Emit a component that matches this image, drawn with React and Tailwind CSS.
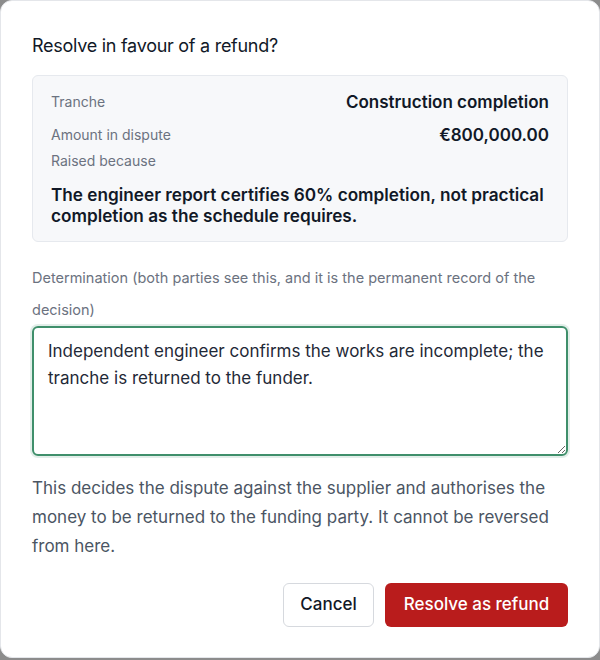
export default function App() {
  return (
    <div className="h-[660px] w-[600px] bg-[#8c8c8c] font-['Inter',sans-serif]">
      <div className="flex h-[658px] w-[600px] flex-col rounded-xl border border-[#e4e6ea] bg-white px-[31px] pt-[31px]">
        <h2 className="text-[18px] leading-7 tracking-[-0.015em] text-[#111827]">
          Resolve in favour of a refund?
        </h2>

        <div className="mt-[15px] rounded-md border border-[#e6e9ee] bg-[#f7f8fa] px-[18px] pt-[14px] pb-[15px]">
          <div className="flex items-center justify-between leading-6">
            <span className="text-[14px] text-[#6b7280]">Tranche</span>
            <span className="text-[17px] font-semibold text-[#111827]">Construction completion</span>
          </div>
          <div className="mt-[9px] flex items-center justify-between leading-6">
            <span className="text-[14px] text-[#6b7280]">Amount in dispute</span>
            <span className="text-[17px] font-semibold text-[#111827]">€800,000.00</span>
          </div>
          <div className="mt-[4px] text-[14px] leading-5 text-[#6b7280]">Raised because</div>
          <p className="mt-[13px] text-[17.2px] font-semibold leading-[21px] text-[#111827]">
            The engineer report certifies 60% completion, not practical completion as the schedule requires.
          </p>
        </div>

        <label className="mt-[20px] text-[14.5px] leading-[32px] text-[#6b7280]">
          Determination (both parties see this, and it is the permanent record of the decision)
        </label>

        <textarea
          className="h-[130px] w-full resize-y rounded-md border-2 border-[#3f8f6b] px-[14px] py-[10px] text-[17px] leading-[27px] text-[#1f2937] shadow-[0_0_0_2px_rgba(63,143,107,0.15)] outline-none"
          defaultValue="Independent engineer confirms the works are incomplete; the tranche is returned to the funder."
        />

        <p className="mt-[18px] text-[17px] leading-[29px] text-[#4b5563]">
          This decides the dispute against the supplier and authorises the money to be returned to the funding party. It cannot be reversed from here.
        </p>

        <div className="mt-[22px] flex justify-end gap-[11px]">
          <button
            type="button"
            className="h-[44px] w-[91px] rounded-md border border-[#d6d9de] bg-white text-[17px] font-medium text-[#111827]"
          >
            Cancel
          </button>
          <button
            type="button"
            className="h-[44px] w-[183px] rounded-md bg-[#b91c1c] text-[17px] font-medium text-white"
          >
            Resolve as refund
          </button>
        </div>
      </div>
    </div>
  );
}
